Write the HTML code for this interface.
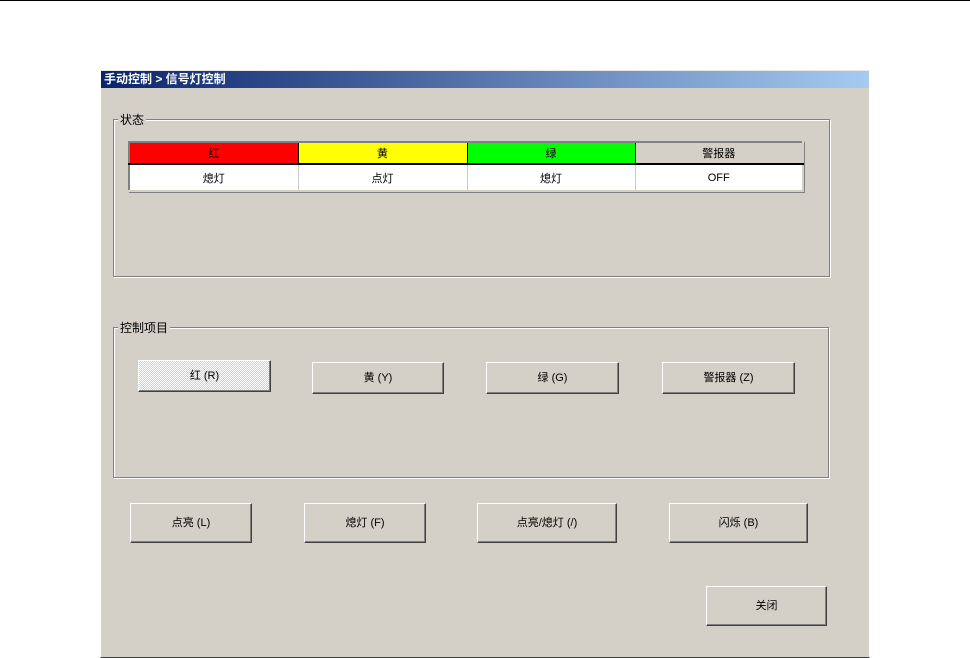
<!DOCTYPE html>
<html><head><meta charset="utf-8"><style>
*{margin:0;padding:0;box-sizing:border-box}
body{width:970px;height:658px;background:#fff;position:relative;overflow:hidden;font-family:"Liberation Sans","Noto Sans CJK SC","WenQuanYi Zen Hei",sans-serif;font-size:12px;color:#000}
.abs{position:absolute}
#top{left:0;top:0;width:970px;height:1px;background:#000}
#panel{left:100px;top:70px;width:770px;height:588px;background:#d4d0c8;border-left:1px solid #fff;border-top:1px solid #e8e8e8;border-right:1px solid #fff;border-bottom:1px solid #404040}
#title{left:101px;top:71px;width:768px;height:17px;background:linear-gradient(to right,#0a246a,#a6caf0);color:#fff;font-weight:bold;font-size:12px;line-height:17px;padding-left:3px}
.grp{border:1px solid #808080;box-shadow:1px 1px 0 #fff inset,1px 1px 0 #fff}
.lbl{background:#d4d0c8;padding:0 2px;font-size:12px;line-height:14px}
table{border-collapse:collapse;position:absolute;left:128px;top:141px;width:676px;border:2px solid #808080;border-right-color:#d4d0c8;border-bottom-color:#d4d0c8;box-shadow:1px 1px 0 #808080}
td{text-align:center;font-size:11px}
tr.h td{border-bottom:2px solid #000;border-right:1px solid #000;height:22px}
tr.d td{background:#fff;border-right:1px solid #ccc;height:27px}
.btn{position:absolute;background:#d4d0c8;border:1px solid;border-color:#fff #404040 #404040 #fff;box-shadow:inset -1px -1px 0 #808080;text-align:center;font-size:11px}
.pressed{background:repeating-conic-gradient(#d4d0c8 0 25%,#fff 0 50%) 0 0/2px 2px;border-color:#fff #404040 #404040 #fff}
</style></head><body>
<div class="abs" id="top"></div>
<div class="abs" id="panel"></div>
<div class="abs" id="title">手动控制 &gt; 信号灯控制</div>
<div class="abs grp" style="left:113px;top:119px;width:717px;height:158px"></div>
<div class="abs lbl" style="left:118px;top:113px">状态</div>
<table>
<tr class="h"><td style="background:#f00;width:169px">红</td><td style="background:#ff0;width:169px">黄</td><td style="background:#0f0;width:168px">绿</td><td style="background:#d4d0c8">警报器</td></tr>
<tr class="d"><td>熄灯</td><td>点灯</td><td>熄灯</td><td>OFF</td></tr>
</table>
<div class="abs grp" style="left:113px;top:327px;width:716px;height:151px"></div>
<div class="abs lbl" style="left:118px;top:321px">控制项目</div>
<div class="btn pressed" style="left:138px;top:360px;width:133px;height:32px;line-height:30px">红 (R)</div>
<div class="btn" style="left:312px;top:362px;width:132px;height:32px;line-height:30px">黄 (Y)</div>
<div class="btn" style="left:486px;top:362px;width:133px;height:32px;line-height:30px">绿 (G)</div>
<div class="btn" style="left:662px;top:362px;width:133px;height:32px;line-height:30px">警报器 (Z)</div>
<div class="btn" style="left:130px;top:503px;width:122px;height:40px;line-height:38px">点亮 (L)</div>
<div class="btn" style="left:304px;top:503px;width:122px;height:40px;line-height:38px">熄灯 (F)</div>
<div class="btn" style="left:477px;top:503px;width:140px;height:40px;line-height:38px">点亮/熄灯 (/)</div>
<div class="btn" style="left:669px;top:503px;width:139px;height:40px;line-height:38px">闪烁 (B)</div>
<div class="btn" style="left:706px;top:586px;width:121px;height:40px;line-height:38px">关闭</div>
</body></html>
